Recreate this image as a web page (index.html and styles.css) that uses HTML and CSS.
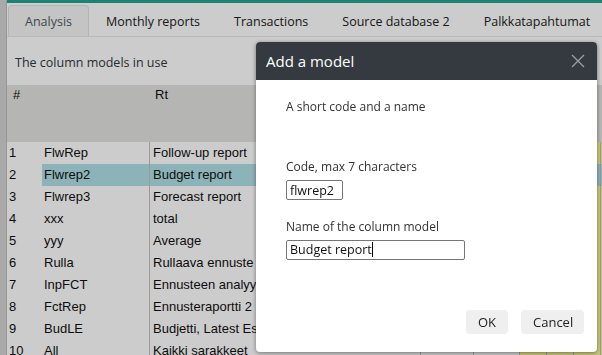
FILE: index.html
```html
<!DOCTYPE html>
<html lang="en">

<head>
  <meta charset="UTF-8">
  <title>Column models</title>
  <link rel="stylesheet" href="styles.css">
</head>

<body>
  <div class="page">
    <!-- Side strip -->
    <div class="side"></div>

    <!-- Main area -->
    <div class="main">
      <div class="topbar"></div>

      <nav class="tabs">
        <div class="tab active">Analysis</div>
        <div class="tab">Monthly reports</div>
        <div class="tab">Transactions</div>
        <div class="tab">Source database 2</div>
        <div class="tab">Palkkatapahtumat</div>
      </nav>

      <div class="toolbar">The column models in use</div>

      <div class="grid">
        <div class="head">
          <div class="cell">#</div>
          <div class="cell"></div>
          <div class="cell">Rt</div>
          <div class="cell"></div>
          <div class="cell"></div>
          <div class="cell"></div>
          <div class="cell"></div>
          <div class="cell"></div>
          <div class="cell">Pr</div>
        </div>

        <div class="row"><div class="cell">1</div><div class="cell">FlwRep</div><div class="cell">Follow-up report</div><div class="cell"></div><div class="cell"></div><div class="cell y"></div><div class="cell y"></div><div class="cell y"></div><div class="cell y"></div></div>
        <div class="row sel"><div class="cell">2</div><div class="cell">Flwrep2</div><div class="cell">Budget report</div><div class="cell"></div><div class="cell"></div><div class="cell y"></div><div class="cell y"></div><div class="cell y"></div><div class="cell y"></div></div>
        <div class="row"><div class="cell">3</div><div class="cell">Flwrep3</div><div class="cell">Forecast report</div><div class="cell"></div><div class="cell"></div><div class="cell y"></div><div class="cell y"></div><div class="cell y"></div><div class="cell y"></div></div>
        <div class="row"><div class="cell">4</div><div class="cell">xxx</div><div class="cell">total</div><div class="cell"></div><div class="cell"></div><div class="cell y"></div><div class="cell y"></div><div class="cell y"></div><div class="cell y"></div></div>
        <div class="row"><div class="cell">5</div><div class="cell">yyy</div><div class="cell">Average</div><div class="cell"></div><div class="cell"></div><div class="cell y"></div><div class="cell y"></div><div class="cell y"></div><div class="cell y"></div></div>
        <div class="row"><div class="cell">6</div><div class="cell">Rulla</div><div class="cell">Rullaava ennuste</div><div class="cell"></div><div class="cell"></div><div class="cell y"></div><div class="cell y"></div><div class="cell y"></div><div class="cell y"></div></div>
        <div class="row"><div class="cell">7</div><div class="cell">InpFCT</div><div class="cell">Ennusteen analyysiraportti</div><div class="cell"></div><div class="cell"></div><div class="cell y"></div><div class="cell y"></div><div class="cell y"></div><div class="cell y"></div></div>
        <div class="row"><div class="cell">8</div><div class="cell">FctRep</div><div class="cell">Ennusteraportti 2</div><div class="cell"></div><div class="cell"></div><div class="cell y"></div><div class="cell y"></div><div class="cell y"></div><div class="cell y"></div></div>
        <div class="row"><div class="cell">9</div><div class="cell">BudLE</div><div class="cell">Budjetti, Latest Estimate</div><div class="cell"></div><div class="cell"></div><div class="cell y"></div><div class="cell y"></div><div class="cell y"></div><div class="cell y"></div></div>
        <div class="row"><div class="cell">10</div><div class="cell">All</div><div class="cell">Kaikki sarakkeet</div><div class="cell caret">^</div><div class="cell"></div><div class="cell y"></div><div class="cell y"></div><div class="cell y"></div><div class="cell y"></div></div>
      </div>
    </div>
  </div>

  <!-- Modal -->
  <div class="backdrop">
    <div class="dialog">
      <div class="dialog-head">
        <h2>Add a model</h2>
        <svg class="close" width="14" height="14" viewBox="0 0 14 14">
          <path d="M1 1 L13 13 M13 1 L1 13" stroke="#9aa0a6" stroke-width="1.3" fill="none"/>
        </svg>
      </div>
      <div class="dialog-body">
        <p class="intro">A short code and a name</p>
        <label class="label">Code, max 7 characters</label>
        <input class="field short" type="text" value="flwrep2">
        <label class="label">Name of the column model</label>
        <div class="field long">Budget report<span class="cursor"></span></div>
        <div class="actions">
          <button class="btn">OK</button>
          <button class="btn">Cancel</button>
        </div>
      </div>
    </div>
  </div>
</body>

</html>
```

FILE: styles.css
```css
* {
  margin: 0;
  padding: 0;
  box-sizing: border-box;
}

html, body {
  width: 100%;
  height: 100%;
  overflow: hidden;
}

body {
  background: white;
  font-family: "Open Sans", sans-serif;
  color: #222;
}

.page {
  display: flex;
  height: 100%;
}

.side {
  width: 7px;
  flex-shrink: 0;
  background: #d4d4d4;
  border-right: 1px solid #bcbcbc;
}

.main {
  flex: 1;
  min-width: 0;
}

.topbar {
  height: 3px;
  background: #22a391;
}

/* Tabs */
.tabs {
  display: flex;
  padding: 2px 0 0 1px;
  border-bottom: 1px solid #e8e8e8;
  white-space: nowrap;
}

.tab {
  padding: 7px 16px 6px;
  font-size: 12.5px;
  line-height: 17px;
  color: #222;
  border: 1px solid transparent;
  border-bottom: 0;
  border-radius: 4px 4px 0 0;
}

.tab.active {
  color: #4e5a64;
  background: #f6f6f6;
  border-color: #e2e2e2;
}

.toolbar {
  height: 48px;
  padding: 17px 0 0 8px;
  font-size: 12.5px;
  color: #303840;
}

/* Table */
.grid {
  font-family: "Liberation Sans", sans-serif;
  font-size: 13px;
  color: #111;
}

.head, .row {
  display: grid;
  grid-template-columns: 35px 107px 271px 53px 46px 27px 27px 27px 40px;
}

.head {
  height: 57px;
  background: #e3e3e1;
}

.head .cell {
  padding: 2px 0 0 6px;
}

.row {
  height: 22px;
  line-height: 22px;
}

.row .cell {
  padding-left: 2px;
  white-space: nowrap;
  overflow: hidden;
}

.row .cell:nth-child(n+3) {
  border-left: 1px solid #bfbfbf;
}

.row .cell:nth-child(3) {
  padding-left: 3px;
}

.cell.y {
  background: #fbfa9b;
}

.row.sel .cell:nth-child(n+2) {
  background: #b0e0e6;
}

.caret {
  font-size: 11px;
  padding-left: 4px;
}

/* Modal */
.backdrop {
  position: fixed;
  inset: 0;
  background: rgba(0, 0, 0, 0.2);
}

.dialog {
  position: absolute;
  left: 256px;
  top: 42px;
  width: 341px;
  height: 310px;
  background: white;
  border-radius: 4px;
  overflow: hidden;
  box-shadow: 0 1px 4px rgba(0, 0, 0, 0.45);
  display: flex;
  flex-direction: column;
}

.dialog-head {
  height: 38px;
  background: #343a40;
  display: flex;
  justify-content: space-between;
  align-items: center;
  padding: 0 12px 0 10px;
}

.dialog-head h2 {
  font-size: 15px;
  font-weight: normal;
  color: white;
}

.dialog-body {
  flex: 1;
  padding: 18px 13px 18px 30px;
  display: flex;
  flex-direction: column;
  align-items: flex-start;
  font-size: 12px;
  color: #333;
}

.intro {
  line-height: 18px;
  margin-bottom: 42px;
}

.label {
  line-height: 18px;
  margin-bottom: 4px;
}

.field {
  height: 20px;
  border: 1px solid #767676;
  border-radius: 2px;
  font-family: "Open Sans", sans-serif;
  font-size: 12.5px;
  color: #111;
  padding: 0 3px;
  line-height: 18px;
  margin-bottom: 18px;
  background: white;
}

.field.short {
  width: 57px;
}

.field.long {
  width: 179px;
}

.cursor {
  display: inline-block;
  width: 1px;
  height: 15px;
  background: #000;
  vertical-align: -3px;
}

.actions {
  margin-top: auto;
  align-self: flex-end;
  display: flex;
  gap: 13px;
}

.btn {
  height: 24px;
  padding: 0 12px;
  font-family: "Open Sans", sans-serif;
  font-size: 13px;
  color: #222;
  background: #efefef;
  border: 0;
  border-radius: 4px;
}

.btn:first-child {
  width: 42px;
}

.btn:last-child {
  width: 63px;
}
```
